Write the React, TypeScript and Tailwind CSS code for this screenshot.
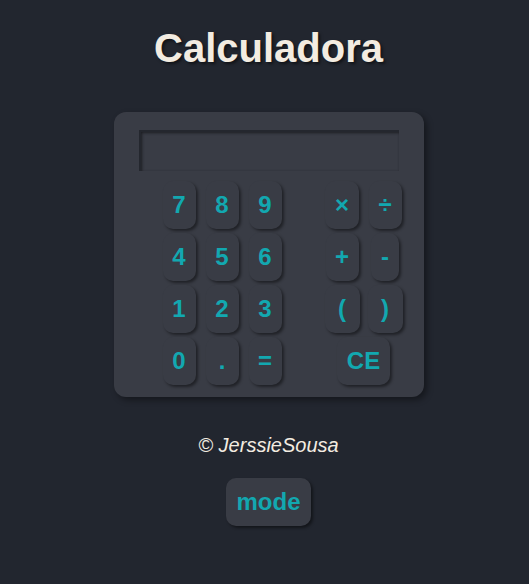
const keys: { label: string; col: number; w: number; span?: boolean }[][] = [
  [
    { label: '7', col: 1, w: 33 },
    { label: '8', col: 2, w: 33 },
    { label: '9', col: 3, w: 33 },
    { label: '×', col: 5, w: 34 },
    { label: '÷', col: 6, w: 33 },
  ],
  [
    { label: '4', col: 1, w: 33 },
    { label: '5', col: 2, w: 33 },
    { label: '6', col: 3, w: 33 },
    { label: '+', col: 5, w: 33 },
    { label: '-', col: 6, w: 28 },
  ],
  [
    { label: '1', col: 1, w: 33 },
    { label: '2', col: 2, w: 33 },
    { label: '3', col: 3, w: 33 },
    { label: '(', col: 5, w: 35 },
    { label: ')', col: 6, w: 35 },
  ],
  [
    { label: '0', col: 1, w: 33 },
    { label: '.', col: 2, w: 33 },
    { label: '=', col: 3, w: 33 },
    { label: 'CE', col: 5, w: 53, span: true },
  ],
];

const colStart: Record<number, string> = {
  1: 'col-start-1',
  2: 'col-start-2',
  3: 'col-start-3',
  5: 'col-start-5',
  6: 'col-start-6',
};

function Key({ label, w, className }: { label: string; w: number; className: string }) {
  return (
    <button
      className={`${className} h-12 rounded-[10px] bg-[#393c45] text-[24px] font-bold leading-none text-[#12a8b0] shadow-[2px_2px_3px_rgba(0,0,0,0.45)]`}
      style={{ width: w }}
    >
      {label}
    </button>
  );
}

export default function App() {
  return (
    <div
      className="min-h-screen bg-[#22262f] pl-2 flex flex-col items-center"
      style={{ fontFamily: '"Liberation Sans", Arial, sans-serif' }}
    >
      <h1 className="mt-[28px] text-[40px] font-bold leading-none text-[#f3ece1] [text-shadow:2px_2px_3px_rgba(0,0,0,0.5)]">
        Calculadora
      </h1>

      <div className="mt-[44px] w-[310px] h-[285px] rounded-[12px] bg-[#393c45] pt-[18px] pl-[25px] shadow-[3px_3px_6px_rgba(0,0,0,0.4)]">
        <div className="w-[260px] h-[41px] bg-[#393c45] border-t-2 border-l-2 border-[#24272e] shadow-[inset_1px_1px_3px_rgba(0,0,0,0.5)]" />

        <div className="mt-[10px] ml-[19px] grid grid-cols-[43px_43px_43px_34px_43px_43px] gap-y-1">
          {keys.map((row) =>
            row.map((k) => (
              <Key
                key={k.label}
                label={k.label}
                w={k.w}
                className={`${colStart[k.col]} ${k.span ? 'col-span-2' : ''} justify-self-center`}
              />
            ))
          )}
        </div>
      </div>

      <p className="mt-[38px] text-[20px] italic leading-none text-[#f3ece1]">© JerssieSousa</p>

      <button className="mt-[23px] w-[85px] h-12 rounded-[10px] bg-[#393c45] text-[24px] font-bold leading-none text-[#12a8b0] shadow-[2px_2px_3px_rgba(0,0,0,0.45)]">
        mode
      </button>
    </div>
  );
}
